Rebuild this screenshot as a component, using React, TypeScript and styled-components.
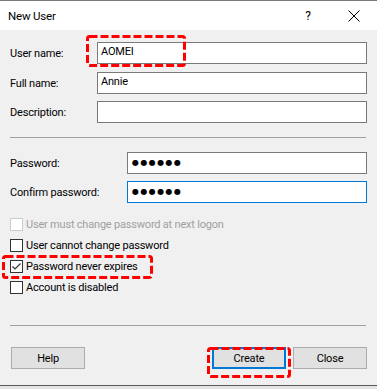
import React from "react";
import styled, { createGlobalStyle } from "styled-components";

const Global = createGlobalStyle`
  html, body { margin: 0; padding: 0; background: #e4e4e4; }
  body { font-family: "Segoe UI", Roboto, "Liberation Sans", sans-serif; font-size: 11px; letter-spacing: -0.2px; color: #000; }
`;

const Window = styled.div`
  position: relative;
  width: 377px;
  height: 386px;
  box-sizing: border-box;
  border-top: 1px solid #7a7a7a;
  border-bottom: 1px solid #5a5a5a;
  background: #f0f0f0;
  display: flex;
  flex-direction: column;
`;

const TitleBar = styled.div`
  height: 29px;
  background: #fff;
  display: flex;
  align-items: center;
  padding-left: 8px;
`;

const Title = styled.div`
  flex: 1;
  font-size: 11.5px;
`;

const TitleButton = styled.div`
  width: 46px;
  height: 29px;
  display: flex;
  align-items: center;
  justify-content: center;
  font-size: 12px;
`;

const Body = styled.div`
  flex: 1;
  padding: 12px 10px 0 10px;
  display: flex;
  flex-direction: column;
`;

const FieldRow = styled.div<{ $labelWidth: number; $mt?: number }>`
  display: grid;
  grid-template-columns: ${(p) => p.$labelWidth}px 1fr;
  align-items: center;
  height: 22px;
  margin-top: ${(p) => p.$mt ?? 0}px;
`;

const Label = styled.div`
  font-size: 11px;
`;

const TextBox = styled.div<{ $focused?: boolean }>`
  height: 22px;
  box-sizing: border-box;
  background: #fff;
  border: 1px solid ${(p) => (p.$focused ? "#0078d7" : "#7a7a7a")};
  padding: 0 3px;
  display: flex;
  align-items: center;
  font-size: 11px;
  line-height: 1;
  padding-bottom: 3px;
`;

const Dots = styled.span`
  font-family: "DejaVu Sans", sans-serif;
  font-size: 8px;
  letter-spacing: 1.4px;
  padding-top: 3px;
  padding-left: 1px;
`;

const Separator = styled.div<{ $mt: number; $mb: number }>`
  height: 1px;
  background: #a0a0a0;
  margin-top: ${(p) => p.$mt}px;
  margin-bottom: ${(p) => p.$mb}px;
  width: 356px;
`;

const CheckRow = styled.div<{ $disabled?: boolean; $mt?: number }>`
  display: flex;
  align-items: center;
  height: 21px;
  gap: 3px;
  margin-top: ${(p) => p.$mt ?? 0}px;
  color: ${(p) => (p.$disabled ? "#a0a0a0" : "#000")};
  font-size: 11px;
`;

const Box = styled.div<{ $disabled?: boolean }>`
  width: 13px;
  height: 13px;
  box-sizing: border-box;
  background: #fff;
  border: 1px solid ${(p) => (p.$disabled ? "#cccccc" : "#333333")};
  display: flex;
  align-items: center;
  justify-content: center;
`;

const ButtonBar = styled.div`
  display: flex;
  align-items: center;
  margin-top: 21px;
  padding-left: 1px;
`;

const Button = styled.div<{ $default?: boolean; $ml?: number }>`
  width: 74px;
  height: 22px;
  box-sizing: border-box;
  margin-left: ${(p) => p.$ml ?? 0}px;
  background: #e1e1e1;
  border: ${(p) => (p.$default ? "2px solid #0078d7" : "1px solid #adadad")};
  display: flex;
  align-items: center;
  justify-content: center;
  font-size: 11px;
`;

const Annotation = styled.svg<{ $x: number; $y: number }>`
  position: absolute;
  left: ${(p) => p.$x}px;
  top: ${(p) => p.$y}px;
  overflow: visible;
  pointer-events: none;
`;

function Mark({ x, y, w, h }: { x: number; y: number; w: number; h: number }) {
  return (
    <Annotation $x={x} $y={y - 1} width={w} height={h}>
      <rect
        x={1.5}
        y={1.5}
        width={w - 3}
        height={h - 3}
        rx={2}
        fill="none"
        stroke="#ff0000"
        strokeWidth={3}
        strokeDasharray="8 3"
      />
    </Annotation>
  );
}

function Check({ checked, disabled, label, mt }: { checked?: boolean; disabled?: boolean; label: string; mt?: number }) {
  return (
    <CheckRow $disabled={disabled} $mt={mt}>
      <Box $disabled={disabled}>
        {checked && (
          <svg width="11" height="11" viewBox="0 0 11 11">
            <path d="M1.5 5.5 L4 8 L9.5 2.5" fill="none" stroke="#333" strokeWidth="1.2" />
          </svg>
        )}
      </Box>
      <span>{label}</span>
    </CheckRow>
  );
}

export default function App() {
  return (
    <>
      <Global />
      <Window>
        <TitleBar>
          <Title>New User</Title>
          <TitleButton>?</TitleButton>
          <TitleButton>
            <svg width="12" height="12" viewBox="0 0 12 12">
              <path d="M0.5 0.5 L11.5 11.5 M11.5 0.5 L0.5 11.5" stroke="#000" strokeWidth="1" />
            </svg>
          </TitleButton>
        </TitleBar>
        <Body>
          <FieldRow $labelWidth={87}>
            <Label>User name:</Label>
            <TextBox>AOMEI</TextBox>
          </FieldRow>
          <FieldRow $labelWidth={87} $mt={8}>
            <Label>Full name:</Label>
            <TextBox>Annie</TextBox>
          </FieldRow>
          <FieldRow $labelWidth={87} $mt={7}>
            <Label>Description:</Label>
            <TextBox />
          </FieldRow>
          <Separator $mt={14} $mb={14} />
          <FieldRow $labelWidth={117}>
            <Label>Password:</Label>
            <TextBox>
              <Dots>●●●●●●</Dots>
            </TextBox>
          </FieldRow>
          <FieldRow $labelWidth={117} $mt={7}>
            <Label>Confirm password:</Label>
            <TextBox $focused>
              <Dots>●●●●●●</Dots>
            </TextBox>
          </FieldRow>
          <Check disabled label="User must change password at next logon" mt={11} />
          <Check label="User cannot change password" />
          <Check checked label="Password never expires" />
          <Check label="Account is disabled" />
          <Separator $mt={27} $mb={0} />
          <ButtonBar>
            <Button>Help</Button>
            <Button $default $ml={127}>Create</Button>
            <Button $ml={7}>Close</Button>
          </ButtonBar>
        </Body>
        <Mark x={86} y={35} w={100} h={32} />
        <Mark x={2} y={255} w={151} h={24} />
        <Mark x={207} y={347} w={84} h={31} />
      </Window>
    </>
  );
}
